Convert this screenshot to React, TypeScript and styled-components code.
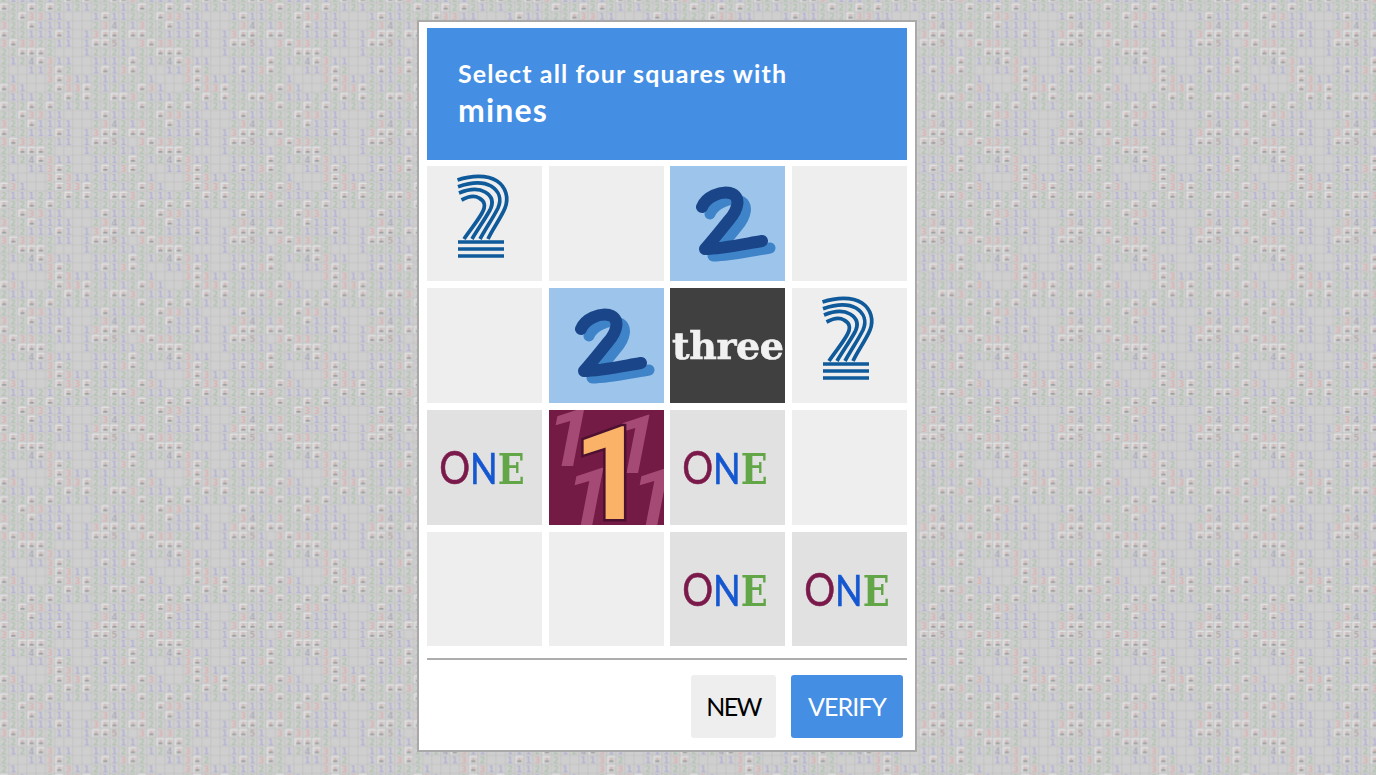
import React from "react";
import styled, { createGlobalStyle } from "styled-components";

const GlobalStyle = createGlobalStyle`
  html, body {
    margin: 0;
    padding: 0;
    height: 100%;
    background: #cfcfcf;
    overflow: hidden;
  }
`;

// one tile of the minesweeper wallpaper: M = opened mine square, . = empty
const BOARD = [
  "M22M2M212122212",
  "22M3311...1M112",
  "322M1111..23421",
  "M22111M1.13MM2M",
  "3M33221 1.1MM51".replace(" ", ""),
  "22MMM2...122211",
  "2124M311..1112M",
  "2..113M2..1M13M",
  "21...3M31121122",
  "M31..2M33M21212",
  "2111212M2M22MM3",
];
const CELL_W = 9.2;
const CELL_H = 8.96;
const DIGIT_COLORS: Record<string, string> = {
  "1": "#aeacd6",
  "2": "#adc2ad",
  "3": "#dcaeae",
  "4": "#a6a6b8",
  "5": "#b5a3a3",
};

const Wallpaper = styled.svg`
  position: fixed;
  inset: 0;
  width: 100%;
  height: 100%;
  z-index: 0;
`;

function BoardWallpaper() {
  return (
    <Wallpaper aria-hidden="true">
      <defs>
        <filter id="soft" x="0" y="0" width="100%" height="100%">
          <feGaussianBlur stdDeviation="0.55" />
        </filter>
        <pattern
          id="board"
          x="-0.6"
          y="2.8"
          width={CELL_W * 15}
          height={CELL_H * 11}
          patternUnits="userSpaceOnUse"
        >
          <rect width={CELL_W * 15} height={CELL_H * 11} fill="#cfcfcf" />
          <g filter="url(#soft)" opacity="0.8">
            {BOARD.map((row, y) =>
              row.split("").map((ch, x) => {
                const px = x * CELL_W;
                const py = y * CELL_H;
                if (ch === "M") {
                  return (
                    <g key={`${x}-${y}`}>
                      <rect x={px + 0.4} y={py + 0.4} width={CELL_W - 0.8} height={1.5} fill="#e6e6e6" />
                      <rect x={px + 0.4} y={py + 0.4} width={1.5} height={CELL_H - 0.8} fill="#e6e6e6" />
                      <rect x={px + 4} y={py + 2.4} width={1.5} height={2.8} fill="#dca5a5" />
                      <rect x={px + 2.6} y={py + 5.2} width={4.2} height={1.3} fill="#828282" />
                    </g>
                  );
                }
                if (ch === ".") return null;
                return (
                  <text
                    key={`${x}-${y}`}
                    x={px + CELL_W / 2}
                    y={py + 7.6}
                    textAnchor="middle"
                    fontFamily="'DejaVu Sans', sans-serif"
                    fontWeight="700"
                    fontSize="8.2"
                    fill={DIGIT_COLORS[ch]}
                  >
                    {ch}
                  </text>
                );
              }),
            )}
            {Array.from({ length: 16 }).map((_, i) => (
              <rect key={`v${i}`} x={i * CELL_W - 0.25} y={0} width={0.5} height={CELL_H * 11} fill="#b4b4b4" />
            ))}
            {Array.from({ length: 12 }).map((_, i) => (
              <rect key={`h${i}`} x={0} y={i * CELL_H - 0.25} width={CELL_W * 15} height={0.5} fill="#b4b4b4" />
            ))}
          </g>
        </pattern>
      </defs>
      <rect width="100%" height="100%" fill="url(#board)" />
    </Wallpaper>
  );
}

const Page = styled.div`
  position: relative;
  z-index: 1;
  display: flex;
  justify-content: center;
  padding-top: 20px;
  padding-right: 42px;
  font-family: Lato, "Liberation Sans", sans-serif;
`;

const Card = styled.div`
  box-sizing: border-box;
  width: 500px;
  height: 732px;
  padding: 6px 8px 0 8px;
  border: 2px solid #a9a9a9;
  background: #fff;
  display: flex;
  flex-direction: column;
`;

const Prompt = styled.div`
  height: 132px;
  padding: 30px 0 0 31px;
  box-sizing: border-box;
  background: #448ee4;
  color: #fff;
  font-weight: 700;
`;

const PromptLine = styled.div`
  font-size: 25px;
  line-height: 30px;
  letter-spacing: 1.12px;
`;

const PromptWord = styled.div`
  font-size: 32px;
  line-height: 44px;
  letter-spacing: 1.2px;
`;

const Grid = styled.div`
  margin-top: 6px;
  display: grid;
  grid-template-columns: repeat(4, 115px);
  grid-template-rows: 115px 115px 115px 114px;
  column-gap: 6.67px;
  row-gap: 7px;
`;

const TONES = {
  blank: "#eeeeee",
  grey: "#e1e1e1",
  sky: "#9dc4ea",
  dark: "#404040",
  wine: "#731a45",
};

const Tile = styled.div<{ $tone: keyof typeof TONES }>`
  overflow: hidden;
  background: ${(p) => TONES[p.$tone]};
  display: flex;
  align-items: center;
  justify-content: center;
`;

const Picture = styled.svg`
  width: 115px;
  height: 115px;
  flex: none;
  display: block;
  filter: blur(0.35px);
`;

const ThreeWord = styled.span`
  font-family: "DejaVu Serif", "Liberation Serif", serif;
  font-weight: 700;
  font-size: 38px;
  letter-spacing: -0.4px;
  line-height: 1;
  color: #f1f1f1;
  -webkit-text-stroke: 0.6px #f1f1f1;
  filter: blur(0.4px);
`;

const OneWord = styled.span`
  display: flex;
  align-items: baseline;
  margin-right: 6px;
  font-family: Lato, "Liberation Sans", sans-serif;
  line-height: 1;
  transform: scaleX(0.84);
  filter: blur(0.3px);
`;

const OneLetter = styled.span<{ $color: string; $size: number }>`
  color: ${(p) => p.$color};
  font-size: ${(p) => p.$size}px;
  font-weight: 400;
  -webkit-text-stroke: 0.6px ${(p) => p.$color};
`;

const OneSlab = styled.span`
  color: #63a648;
  font-family: "DejaVu Serif", serif;
  font-size: 42px;
  font-weight: 700;
`;

const Divider = styled.div`
  margin-top: 12px;
  height: 2px;
  background: #adadad;
`;

const Actions = styled.div`
  margin-top: 15px;
  padding-right: 4px;
  display: flex;
  justify-content: flex-end;
  gap: 15px;
`;

const ActionButton = styled.button<{ $primary?: boolean }>`
  height: 63px;
  width: ${(p) => (p.$primary ? "112px" : "85px")};
  padding: 0 0 2px;
  border: 0;
  border-radius: 3px;
  background: ${(p) => (p.$primary ? "#448ee4" : "#eeeeee")};
  color: ${(p) => (p.$primary ? "#fff" : "#000")};
  font-family: Lato, "Liberation Sans", sans-serif;
  font-size: 25px;
  letter-spacing: ${(p) => (p.$primary ? "-1px" : "-1.6px")};
`;

function LinedTwo() {
  return (
    <Picture viewBox="0 0 115 115">
      <g fill="none" stroke="#0f5a9a" strokeWidth="3.7">
        <path d="M30.5 14 C44 9.5 60 8.5 70 15 C79 21 82 32 78 42 C74 52 66 62 61 73" />
        <path d="M31 20.7 C43 16.5 56 15.5 64 20 C72 25 75 33 71 42 C66 52 59 62 53 73" />
        <path d="M32 27 C42 23 52 22.5 58 26 C65 30 67 36 63 44 C58 53 51 63 45 73" />
        <path d="M34.5 34 C41 30.5 48 29.5 52 32 C58 35 59 40 55 47 C50 56 43 64 37 73" />
        <path d="M31 76 H77 M31 83 H77 M31 90 H77" />
      </g>
    </Picture>
  );
}

function BrushTwo() {
  const stroke = "M32 41 C36 31 50 25 60 27 C72 30 68 44 59 54 C51 64 43 74 35 83 C52 83 74 78 92 75";
  return (
    <Picture viewBox="0 0 115 115">
      <path d={stroke} transform="translate(8 7)" fill="none" stroke="#3f84c9" strokeWidth="11" strokeLinecap="round" strokeLinejoin="round" />
      <path d={stroke} fill="none" stroke="#1b4589" strokeWidth="12" strokeLinecap="round" strokeLinejoin="round" />
    </Picture>
  );
}

function BurstOne() {
  const ghost = { fontFamily: "Roboto, sans-serif", fontWeight: 700, fontSize: 82, fill: "#a54a75" };
  return (
    <Picture viewBox="0 0 115 115">
      <text transform="translate(-8 56) skewX(-11)" {...ghost}>1</text>
      <text transform="translate(57 63) skewX(-11)" {...ghost}>1</text>
      <text transform="translate(11 116) skewX(-11)" {...ghost}>1</text>
      <text transform="translate(76 116) skewX(-11)" {...ghost}>1</text>
      <text
        x="24"
        y="109"
        fontFamily="Roboto, sans-serif"
        fontWeight="700"
        fontSize="130"
        fill="#f9b267"
        stroke="#4c1030"
        strokeWidth="5"
        paintOrder="stroke"
      >
        1
      </text>
    </Picture>
  );
}

function One() {
  return (
    <OneWord>
      <OneLetter $color="#7a1a4b" $size={46}>O</OneLetter>
      <OneLetter $color="#1557d0" $size={43}>N</OneLetter>
      <OneSlab>E</OneSlab>
    </OneWord>
  );
}

export default function App() {
  return (
    <>
      <GlobalStyle />
      <BoardWallpaper />
      <Page>
        <Card>
          <Prompt>
            <PromptLine>Select all four squares with</PromptLine>
            <PromptWord>mines</PromptWord>
          </Prompt>
          <Grid>
            <Tile $tone="blank"><LinedTwo /></Tile>
            <Tile $tone="blank" />
            <Tile $tone="sky"><BrushTwo /></Tile>
            <Tile $tone="blank" />

            <Tile $tone="blank" />
            <Tile $tone="sky"><BrushTwo /></Tile>
            <Tile $tone="dark"><ThreeWord>three</ThreeWord></Tile>
            <Tile $tone="blank"><LinedTwo /></Tile>

            <Tile $tone="grey"><One /></Tile>
            <Tile $tone="wine"><BurstOne /></Tile>
            <Tile $tone="grey"><One /></Tile>
            <Tile $tone="blank" />

            <Tile $tone="blank" />
            <Tile $tone="blank" />
            <Tile $tone="grey"><One /></Tile>
            <Tile $tone="grey"><One /></Tile>
          </Grid>
          <Divider />
          <Actions>
            <ActionButton>NEW</ActionButton>
            <ActionButton $primary>VERIFY</ActionButton>
          </Actions>
        </Card>
      </Page>
    </>
  );
}
